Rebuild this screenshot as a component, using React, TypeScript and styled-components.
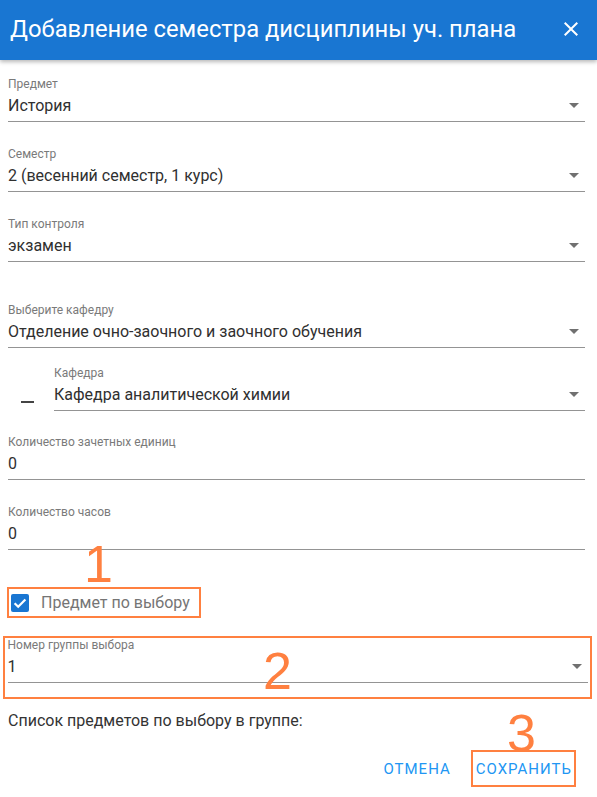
import styled, { createGlobalStyle } from 'styled-components'

// Page reset
const GlobalStyle = createGlobalStyle`
  body {
    margin: 0;
    background: #ffffff;
    font-family: Roboto, 'Liberation Sans', sans-serif;
  }
`;

// Whole dialog, annotations are placed against it
const Dialog = styled.div`
  position: relative;
  width: 597px;
  height: 797px;
  background: #ffffff;
  overflow: hidden;
`;

// Blue title bar
const Header = styled.div`
  display: flex;
  align-items: center;
  justify-content: space-between;
  height: 60px;
  padding: 0 14px 2px 10px;
  box-sizing: border-box;
  background: #1976d2;
  box-shadow: 0 2px 4px rgba(0, 0, 0, 0.28);
  color: #ffffff;
`;

const Title = styled.div`
  font-size: 23.8px;
  font-weight: 400;
`;

const CloseButton = styled.div`
  display: flex;
  align-items: center;
  justify-content: center;
  width: 24px;
  height: 24px;
`;

// Form body
const Body = styled.div`
  display: flex;
  flex-direction: column;
  padding: 17px 12px 0 8px;
`;

interface FieldProps {
  $top?: number;
}

// One labelled select / text field
const Field = styled.div<FieldProps>`
  display: flex;
  flex-direction: column;
  margin-top: ${(p) => p.$top ?? 0}px;
  flex: 1;
`;

const Label = styled.div`
  font-size: 12px;
  line-height: 15px;
  color: #7a7a7a;
  margin-bottom: 1px;
`;

const ValueRow = styled.div`
  display: flex;
  align-items: center;
  justify-content: space-between;
  height: 24px;
  padding-bottom: 4px;
  border-bottom: 1px solid #949494;
  font-size: 16px;
  color: #303030;
`;

const ArrowIcon = styled.svg`
  width: 24px;
  height: 24px;
  margin-right: -1px;
  fill: #707070;
`;

// Indented sub-field (Кафедра)
const SubRow = styled.div<FieldProps>`
  display: flex;
  align-items: flex-end;
  margin-top: ${(p) => p.$top ?? 0}px;
`;

const Dash = styled.div`
  width: 13px;
  height: 2px;
  background: #444444;
  margin: 0 20px 8px 13px;
`;

// Orange annotation frames
const MarkBox = styled.div<{ $pad: string; $margin: string }>`
  border: 2.5px solid #ff8040;
  padding: ${(p) => p.$pad};
  margin: ${(p) => p.$margin};
`;

const CheckRow = styled.div`
  display: flex;
  align-items: center;
  gap: 12px;
  height: 27px;
  font-size: 16px;
  color: #757575;
`;

const CheckIcon = styled.svg`
  width: 18px;
  height: 18px;
`;

const Note = styled.div`
  margin-top: 12px;
  font-size: 16px;
  line-height: 19px;
  color: #333333;
`;

// Bottom action buttons
const Actions = styled.div`
  display: flex;
  justify-content: flex-end;
  align-items: center;
  gap: 20px;
  margin-top: 20px;
  padding-right: 11px;
`;

const Button = styled.div`
  font-size: 15px;
  line-height: 16px;
  letter-spacing: 1px;
  color: #2196f3;
  text-transform: uppercase;
`;

// Big annotation numbers on top of the form
const Num = styled.div`
  position: absolute;
  font-family: 'Liberation Sans', Arial, sans-serif;
  font-size: 52px;
  line-height: 1;
  color: #ff8040;
`;

const Arrow = () => (
  <ArrowIcon viewBox="0 0 24 24">
    <path d="M7 10l5 5 5-5z" />
  </ArrowIcon>
);

interface SelectProps {
  label: string;
  value: string;
  top?: number;
  select?: boolean;
}

const SelectField = ({ label, value, top, select = true }: SelectProps) => (
  <Field $top={top}>
    <Label>{label}</Label>
    <ValueRow>
      <span>{value}</span>
      {select && <Arrow />}
    </ValueRow>
  </Field>
);

const App = () => {
  return (
    <Dialog>
      <GlobalStyle />
      <Header>
        <Title>Добавление семестра дисциплины уч. плана</Title>
        <CloseButton>
          <svg width="24" height="24" viewBox="0 0 24 24" fill="#ffffff">
            <path d="M19 6.41 17.59 5 12 10.59 6.41 5 5 6.41 10.59 12 5 17.59 6.41 19 12 13.41 17.59 19 19 17.59 13.41 12z" />
          </svg>
        </CloseButton>
      </Header>

      <Body>
        <SelectField label="Предмет" value="История" />
        <SelectField label="Семестр" value="2 (весенний семестр, 1 курс)" top={25} />
        <SelectField label="Тип контроля" value="экзамен" top={25} />
        <SelectField label="Выберите кафедру" value="Отделение очно-заочного и заочного обучения" top={41} />
        <SubRow $top={18}>
          <Dash />
          <SelectField label="Кафедра" value="Кафедра аналитической химии" />
        </SubRow>
        <SelectField label="Количество зачетных единиц" value="0" top={24} select={false} />
        <SelectField label="Количество часов" value="0" top={25} select={false} />

        <MarkBox $pad="0 0 0 2px" $margin="37px 0 0 -1px" style={{ width: 188 }}>
          <CheckRow>
            <CheckIcon viewBox="0 0 18 18">
              <rect x="0" y="0" width="18" height="18" rx="2" fill="#1976d2" />
              <path d="M3.6 9.2l3.6 3.6 7.2-7.4" stroke="#ffffff" strokeWidth="2.2" fill="none" />
            </CheckIcon>
            Предмет по выбору
          </CheckRow>
        </MarkBox>

        <MarkBox $pad="0 2px 14px 2.5px" $margin="18px -7px 0 -5px">
          <SelectField label="Номер группы выбора" value="1" />
        </MarkBox>

        <Note>Список предметов по выбору в группе:</Note>

        <Actions>
          <Button>Отмена</Button>
          <MarkBox $pad="9px 2px 8px 3px" $margin="0 -2px 0 0">
            <Button>Сохранить</Button>
          </MarkBox>
        </Actions>
      </Body>

      <Num style={{ left: 84, top: 538 }}>1</Num>
      <Num style={{ left: 263, top: 645 }}>2</Num>
      <Num style={{ left: 507, top: 707 }}>3</Num>
    </Dialog>
  );
};

export default App;
